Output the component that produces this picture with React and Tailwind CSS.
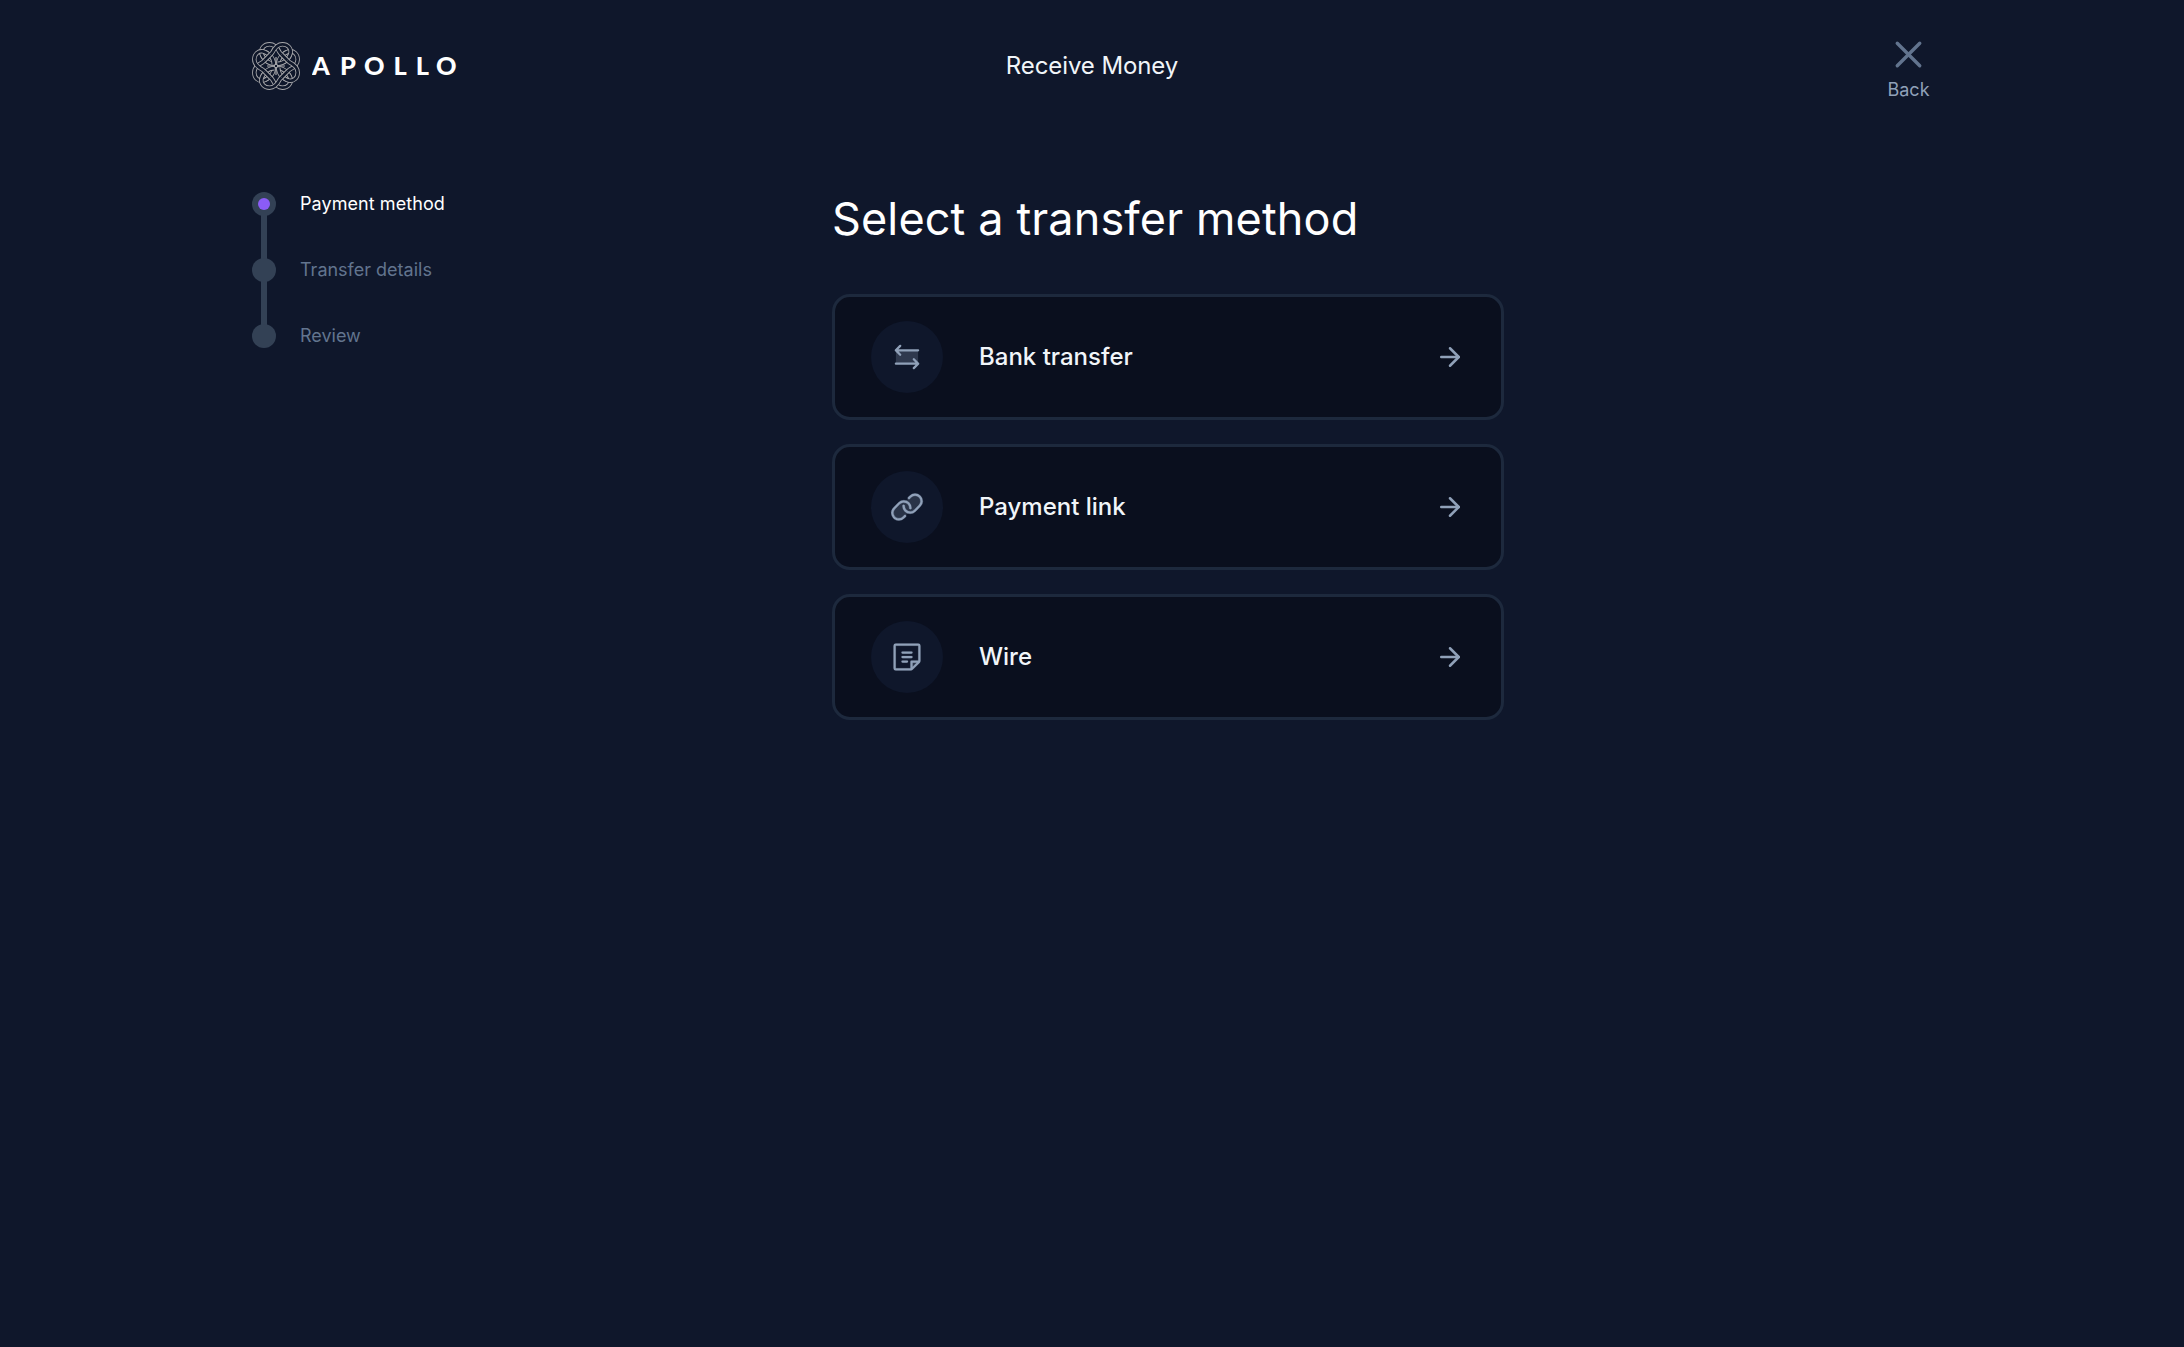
import { ArrowRight, X } from "lucide-react";
import { PiLinkDuotone, PiNoteDuotone } from "react-icons/pi";

const BG = "#0f172a";
const LINE = "#a8a8ab";

// Strands of one quarter of the knot, bottom layer first; the other three
// quarters are rotations about the centre.
const STRANDS = [
  "M9.4 11 C10.2 15.5 15 21.8 22.5 21.8",
  "M11 9.4 C15.5 10.2 21.8 15 21.8 22.5",
  "M33 16 L28 11 C25.5 6 22.5 2.3 17.6 2.3 C12 2.3 8.6 6.4 9.4 11 C9.7 12.6 10.6 14.3 11.8 15.8",
  "M16 33 L11 28 C6 25.5 2.3 22.5 2.3 17.6 C2.3 12 6.4 8.6 11 9.4 C12.6 9.7 14.3 10.6 15.8 11.8",
  "M12.5 18.5 L18.5 12.5",
];

function Knot() {
  return (
    <svg viewBox="0 0 48 48" className="size-12 shrink-0" fill="none">
      {STRANDS.map((d) =>
        [0, 90, 180, 270].map((angle) => (
          <g key={d + angle} transform={`rotate(${angle} 24 24)`}>
            <path d={d} stroke={LINE} strokeWidth="4.4" />
            <path d={d} stroke={BG} strokeWidth="2.7" />
          </g>
        ))
      )}
      <path d="M24 15v18M15 24h18" stroke={LINE} strokeWidth="1.2" />
      <circle cx="24" cy="24" r="1.7" fill={BG} stroke={LINE} strokeWidth="1" />
    </svg>
  );
}

function Logo() {
  return (
    <div className="flex items-center gap-3">
      <Knot />
      <svg viewBox="0 0 150 30" className="h-[30px] w-[150px]">
        <text
          x="0 28 51.9 81.6 103.7 124"
          y="24"
          fill="#ffffff"
          className="font-['Lato',sans-serif] text-[25.3px] font-black"
        >
          APOLLO
        </text>
      </svg>
    </div>
  );
}

function SwapIcon() {
  return (
    <svg viewBox="0 0 36 36" className="size-9" fill="none" stroke="currentColor" strokeWidth="2.3" strokeLinecap="round" strokeLinejoin="round">
      <path d="M6.9 11.3h22.2v13.4H6.9z" fill="currentColor" fillOpacity="0.25" stroke="none" />
      <path d="M29.1 11.3H6.9M11.2 6.9l-4.4 4.4 4.4 4.4M6.9 24.7h22.2M24.8 20.3l4.4 4.4-4.4 4.4" />
    </svg>
  );
}

const METHODS = [
  { label: "Bank transfer", icon: <SwapIcon /> },
  { label: "Payment link", icon: <PiLinkDuotone className="size-9 stroke-current stroke-[2]" /> },
  { label: "Wire", icon: <PiNoteDuotone className="size-9 stroke-current stroke-[1]" /> },
];

function MethodCard({ label, icon }) {
  return (
    <button className="flex h-[126px] w-full items-center rounded-[18px] border-[3px] border-slate-800 bg-[#0a0f1e] px-9 text-left">
      <span className="flex size-[72px] items-center justify-center rounded-full bg-slate-900 text-slate-400">{icon}</span>
      <span className="ml-9 flex-1 text-[24px] leading-9 font-medium text-slate-100">{label}</span>
      <ArrowRight className="size-[30px] text-slate-400" />
    </button>
  );
}

const STEPS = ["Payment method", "Transfer details", "Review"];

function Stepper() {
  return (
    <ol className="flex w-[580px] flex-col pt-3">
      {STEPS.map((step, i) => (
        <li key={step} className="flex gap-6">
          <div className="flex flex-col items-center">
            <span className="flex size-6 items-center justify-center rounded-full bg-[#334155]">
              {i === 0 && <span className="size-3 rounded-full bg-[#8b5cf6]" />}
            </span>
            {i < STEPS.length - 1 && <span className="-my-px h-11 w-1.5 bg-[#334155]" />}
          </div>
          <span
            className={
              i === 0 ? "text-[18px] leading-6 tracking-[0.07px] text-white" : "text-[18px] leading-6 text-slate-500"
            }
          >
            {step}
          </span>
        </li>
      ))}
    </ol>
  );
}

export default function App() {
  return (
    <div className="h-[1347px] w-[2184px] overflow-hidden bg-slate-900 px-[252px] font-['Inter',sans-serif]">
      <header className="grid h-[132px] grid-cols-3 items-center">
        <Logo />
        <h2 className="text-center text-[24px] leading-9 tracking-[-0.1px] text-slate-100">Receive Money</h2>
        <button className="mr-px flex flex-col items-center justify-self-end pt-[3px] text-slate-500">
          <X className="size-[45px]" strokeWidth={1.8} />
          <span className="text-[18px] leading-[26px] text-slate-400">Back</span>
        </button>
      </header>
      <main className="flex pt-12">
        <Stepper />
        <section className="w-[672px]">
          <h1 className="mt-3 mb-12 text-[45px] leading-[54px] tracking-[0.13px] text-white">Select a transfer method</h1>
          <div className="flex flex-col gap-6">
            {METHODS.map((m) => (
              <MethodCard key={m.label} {...m} />
            ))}
          </div>
        </section>
      </main>
    </div>
  );
}
